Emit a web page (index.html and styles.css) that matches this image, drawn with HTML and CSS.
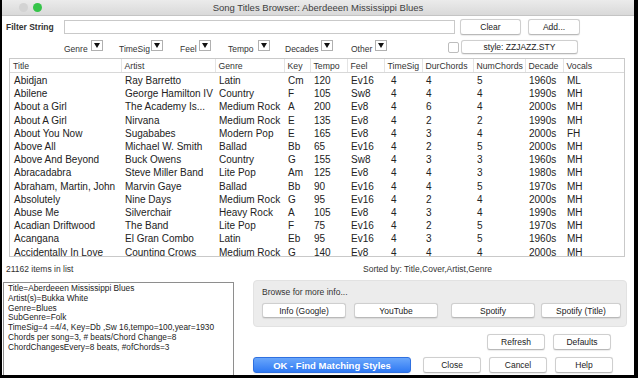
FILE: index.html
```html
<!DOCTYPE html>
<html lang="en">

<head>
  <meta charset="UTF-8">
  <title>Song Titles Browser</title>
  <link rel="stylesheet" href="styles.css">
</head>

<body>
  <div class="window">
    <div class="titlebar">
      <div class="lights">
        <span class="light off"></span>
        <span class="light green"></span>
      </div>
      <div class="title">Song Titles Browser: Aberdeeen Mississippi Blues</div>
      <div></div>
    </div>

    <div class="filter-row">
      <div class="filter-label">Filter String</div>
      <div class="filter-input"></div>
      <button class="btn clear-btn">Clear</button>
      <button class="btn add-btn">Add...</button>
    </div>

    <div class="drop-row">
      <div class="drop g-genre"><span>Genre</span><span class="arrow"></span></div>
      <div class="drop g-timesig"><span>TimeSig</span><span class="arrow"></span></div>
      <div class="drop g-feel"><span>Feel</span><span class="arrow"></span></div>
      <div class="drop g-tempo"><span>Tempo</span><span class="arrow"></span></div>
      <div class="drop g-decades"><span>Decades</span><span class="arrow"></span></div>
      <div class="drop g-other"><span>Other</span><span class="arrow"></span></div>
      <span class="check"></span>
      <button class="btn style-btn">style: ZZJAZZ.STY</button>
    </div>

    <div class="songs">
      <table>
        <colgroup>
          <col style="width:111px"><col style="width:94px"><col style="width:69px"><col style="width:26px">
          <col style="width:37px"><col style="width:37px"><col style="width:38px"><col style="width:51px">
          <col style="width:52px"><col style="width:38px"><col style="width:61px">
        </colgroup>
        <thead>
          <tr><th>Title</th><th>Artist</th><th>Genre</th><th>Key</th><th>Tempo</th><th>Feel</th><th>TimeSig</th><th>DurChords</th><th>NumChords</th><th>Decade</th><th>Vocals</th></tr>
        </thead>
        <tbody>
          <tr><td>Abidjan</td><td>Ray Barretto</td><td>Latin</td><td>Cm</td><td>120</td><td>Ev16</td><td class="ts">4</td><td>4</td><td>5</td><td>1960s</td><td>ML</td></tr>
          <tr><td>Abilene</td><td>George Hamilton IV</td><td>Country</td><td>F</td><td>105</td><td>Sw8</td><td class="ts">4</td><td>4</td><td>4</td><td>1990s</td><td>MH</td></tr>
          <tr><td>About a Girl</td><td>The Academy Is...</td><td>Medium Rock</td><td>A</td><td>200</td><td>Ev8</td><td class="ts">4</td><td>6</td><td>4</td><td>2000s</td><td>MH</td></tr>
          <tr><td>About A Girl</td><td>Nirvana</td><td>Medium Rock</td><td>E</td><td>135</td><td>Ev8</td><td class="ts">4</td><td>2</td><td>2</td><td>1990s</td><td>MH</td></tr>
          <tr><td>About You Now</td><td>Sugababes</td><td>Modern Pop</td><td>E</td><td>165</td><td>Ev8</td><td class="ts">4</td><td>3</td><td>4</td><td>2000s</td><td>FH</td></tr>
          <tr><td>Above All</td><td>Michael W. Smith</td><td>Ballad</td><td>Bb</td><td>65</td><td>Ev16</td><td class="ts">4</td><td>2</td><td>5</td><td>2000s</td><td>MH</td></tr>
          <tr><td>Above And Beyond</td><td>Buck Owens</td><td>Country</td><td>G</td><td>155</td><td>Sw8</td><td class="ts">4</td><td>3</td><td>3</td><td>1960s</td><td>MH</td></tr>
          <tr><td>Abracadabra</td><td>Steve Miller Band</td><td>Lite Pop</td><td>Am</td><td>125</td><td>Ev8</td><td class="ts">4</td><td>4</td><td>3</td><td>1980s</td><td>MH</td></tr>
          <tr><td>Abraham, Martin, John</td><td>Marvin Gaye</td><td>Ballad</td><td>Bb</td><td>90</td><td>Ev16</td><td class="ts">4</td><td>4</td><td>5</td><td>1970s</td><td>MH</td></tr>
          <tr><td>Absolutely</td><td>Nine Days</td><td>Medium Rock</td><td>G</td><td>95</td><td>Ev16</td><td class="ts">4</td><td>2</td><td>4</td><td>2000s</td><td>MH</td></tr>
          <tr><td>Abuse Me</td><td>Silverchair</td><td>Heavy Rock</td><td>A</td><td>105</td><td>Ev8</td><td class="ts">4</td><td>3</td><td>4</td><td>1990s</td><td>MH</td></tr>
          <tr><td>Acadian Driftwood</td><td>The Band</td><td>Lite Pop</td><td>F</td><td>75</td><td>Ev16</td><td class="ts">4</td><td>2</td><td>5</td><td>1970s</td><td>MH</td></tr>
          <tr><td>Acangana</td><td>El Gran Combo</td><td>Latin</td><td>Eb</td><td>95</td><td>Ev16</td><td class="ts">4</td><td>3</td><td>5</td><td>1960s</td><td>MH</td></tr>
          <tr><td>Accidentally In Love</td><td>Counting Crows</td><td>Medium Rock</td><td>G</td><td>140</td><td>Ev8</td><td class="ts">4</td><td>4</td><td>4</td><td>2000s</td><td>MH</td></tr>
        </tbody>
      </table>
    </div>

    <div class="status-row">
      <span class="count">21162 items in list</span>
      <span class="sorted">Sorted by: Title,Cover,Artist,Genre</span>
    </div>

    <div class="bottom">
      <div class="info">
        <div class="l1">Title=Aberdeeen Mississippi Blues</div>
        <div class="l1">Artist(s)=Bukka White</div>
        <div class="l2 gap">Genre=Blues</div>
        <div class="l2">SubGenre=Folk</div>
        <div class="l2">TimeSig=4 =4/4, Key=Db ,Sw 16,tempo=100,year=1930</div>
        <div class="l3">Chords per song=3, # beats/Chord Change=8</div>
        <div class="l3">ChordChangesEvery=8 beats, #ofChords=3</div>
      </div>

      <div class="actions">
        <div class="browse">
          <div class="browse-title">Browse for more info...</div>
          <div class="browse-btns">
            <button class="btn b-google">Info (Google)</button>
            <button class="btn b-youtube">YouTube</button>
            <button class="btn b-spotify">Spotify</button>
            <button class="btn b-spotify2">Spotify (Title)</button>
          </div>
        </div>
        <div class="row-refresh">
          <button class="btn small">Refresh</button>
          <button class="btn small">Defaults</button>
        </div>
        <div class="row-ok">
          <button class="btn ok-btn">OK - Find Matching Styles</button>
          <button class="btn small close-btn">Close</button>
          <button class="btn small">Cancel</button>
          <button class="btn small">Help</button>
        </div>
      </div>
    </div>
  </div>
</body>

</html>
```

FILE: styles.css
```css
body {
  margin: 0;
  overflow: hidden;
  font-family: "Liberation Sans", Arial, sans-serif;
  color: #222;
}

.window {
  width: 638px;
  height: 378px;
  box-sizing: border-box;
  border-left: 2px solid #000;
  border-right: 4px solid #000;
  border-bottom: 3px solid #000;
  background: #fff;
  display: flex;
  flex-direction: column;
  overflow: hidden;
}

/* title bar */
.titlebar {
  height: 15px;
  flex: none;
  display: grid;
  grid-template-columns: 1fr auto 1fr;
  align-items: center;
  background: linear-gradient(#ebebeb, #d9d9d9);
  border-bottom: 1px solid #c4c4c4;
}

.lights {
  display: flex;
  gap: 5px;
  padding-left: 17px;
}

.light {
  width: 9px;
  height: 9px;
  border-radius: 50%;
}

.light.off {
  background: #d3d3d3;
}

.light.green {
  background: #35c449;
}

.title {
  font-size: 9.5px;
  color: #404040;
}

/* buttons */
.btn {
  font-family: inherit;
  font-size: 8.5px;
  color: #222;
  background: #fff;
  border: 1px solid #cfcfcf;
  border-bottom-color: #b9b9b9;
  border-radius: 3px;
  padding: 0;
  height: 15px;
  box-shadow: 0 0.5px 1px rgba(0, 0, 0, 0.08);
}

/* filter */
.filter-row {
  display: flex;
  align-items: center;
  height: 15px;
  margin-top: 3px;
  padding-left: 4px;
}

.filter-label {
  width: 58px;
  font-size: 8.5px;
  font-weight: bold;
  color: #333;
}

.filter-input {
  width: 391px;
  height: 14px;
  box-sizing: border-box;
  border: 1px solid #c9c9c9;
  background: #fff;
}

.clear-btn {
  margin-left: 5px;
  width: 61px;
  height: 16px;
}

.add-btn {
  margin-left: 7px;
  width: 52px;
  height: 16px;
}

/* dropdown row */
.drop-row {
  display: flex;
  align-items: flex-end;
  height: 14px;
  margin-top: 6px;
  padding-left: 62px;
}

.drop {
  display: flex;
  align-items: flex-end;
  gap: 3px;
  font-size: 8.5px;
  color: #333;
}

.g-genre { width: 55px; }
.g-timesig { width: 61px; gap: 1px; }
.g-feel { width: 48px; gap: 2px; }
.g-tempo { width: 57px; gap: 4px; }
.g-decades { width: 66px; gap: 2px; }
.g-other { width: 97px; }

.drop span:first-child {
  line-height: 9px;
}

.arrow {
  width: 12px;
  height: 11px;
  box-sizing: border-box;
  border: 1px solid #b0b0b0;
  background: #fff;
  display: flex;
  align-items: center;
  justify-content: center;
  margin-bottom: 3px;
}

.arrow::after {
  content: "";
  border-left: 3px solid transparent;
  border-right: 3px solid transparent;
  border-top: 5px solid #111;
  margin-top: -1px;
}

.check {
  width: 11px;
  height: 11px;
  box-sizing: border-box;
  border: 1px solid #bdbdbd;
  border-radius: 2px;
  background: #fff;
  margin-bottom: 1px;
  margin-right: 2px;
}

.style-btn {
  width: 117px;
  height: 14px;
  font-size: 8.5px;
}

/* song table */
.songs {
  margin: 4px 0 0 7px;
  width: 616px;
  height: 199px;
  box-sizing: border-box;
  border: 1px solid #c9c9c9;
  overflow: hidden;
  flex: none;
}

.songs table {
  border-collapse: collapse;
  table-layout: fixed;
  width: 614px;
}

.songs th {
  height: 13px;
  padding: 0 0 0 3px;
  font-size: 8.7px;
  font-weight: normal;
  color: #333;
  text-align: left;
  border-right: 1px solid #e4e4e4;
  border-bottom: 1px solid #d8d8d8;
  white-space: nowrap;
  overflow: hidden;
}

.songs th:last-child {
  border-right: none;
}

.songs td {
  height: 13.2px;
  padding: 0 0 0 4px;
  font-size: 10px;
  line-height: 13.2px;
  color: #222;
  white-space: nowrap;
  overflow: hidden;
}

.songs tbody tr:first-child td {
  padding-top: 1px;
}

.songs td.ts {
  padding-left: 7px;
}

/* status */
.status-row {
  display: flex;
  align-items: center;
  height: 12px;
  margin-top: 6px;
  font-size: 8.5px;
  color: #333;
  flex: none;
}

.count {
  padding-left: 4px;
  width: 357px;
}

/* bottom area */
.bottom {
  display: flex;
  flex: 1;
  margin-top: 5px;
}

.info {
  width: 231px;
  margin: 2px 0 0 1px;
  box-sizing: border-box;
  border: 1px solid #8e8e8e;
  border-bottom: none;
  padding: 1px 0 0 4px;
  font-size: 8.3px;
  color: #222;
}

.info .l1 { line-height: 9.6px; }
.info .l2 { line-height: 9.4px; }
.info .l3 { line-height: 10.4px; }
.info .gap { margin-top: 0.5px; }

.actions {
  margin-left: 19px;
  width: 374px;
  display: flex;
  flex-direction: column;
}

.browse {
  height: 47px;
  box-sizing: border-box;
  background: #ececec;
  border: 1px solid #e2e2e2;
  border-radius: 4px;
  padding: 6px 0 0 8px;
}

.browse-title {
  font-size: 8.5px;
  color: #333;
  height: 10px;
}

.browse-btns {
  display: flex;
  margin-top: 6px;
}

.browse-btns .btn {
  height: 15px;
}

.b-google { width: 84px; }
.b-youtube { width: 84px; margin-left: 8px; }
.b-spotify { width: 84px; margin-left: 13px; }
.b-spotify2 { width: 80px; margin-left: 6px; }

.row-refresh {
  display: flex;
  justify-content: flex-end;
  gap: 8px;
  margin-top: 7px;
  padding-right: 16px;
}

.small {
  width: 58px;
  height: 16px;
}

.row-ok {
  display: flex;
  align-items: center;
  gap: 8px;
  margin-top: 7px;
}

.ok-btn {
  width: 158px;
  height: 16px;
  border: 1px solid #2f70e0;
  background: linear-gradient(#69a6fb, #2f79f3);
  color: #fff;
  font-weight: bold;
  font-size: 9.5px;
}

.close-btn {
  margin-left: 4px;
}
```
